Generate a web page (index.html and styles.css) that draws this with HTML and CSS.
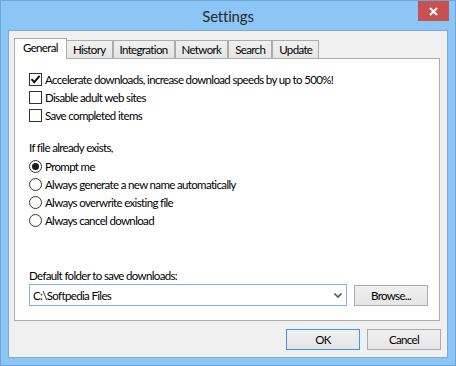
FILE: index.html
```html
<!DOCTYPE html>
<html>
<head>
<meta charset="utf-8">
<title>Settings</title>
<link rel="stylesheet" href="styles.css">
</head>
<body>
<div class="window">
  <div class="titlebar">
    <span class="title">Settings</span>
    <div class="close"><svg width="9" height="9" viewBox="0 0 9 9"><path d="M1 1L8 8M8 1L1 8" stroke="#fff" stroke-width="2" fill="none"/></svg></div>
  </div>
  <div class="client">
    <div class="tabs">
      <div class="tab selected">General</div>
      <div class="tab">History</div>
      <div class="tab">Integration</div>
      <div class="tab">Network</div>
      <div class="tab">Search</div>
      <div class="tab">Update</div>
    </div>
    <div class="panel">
      <div class="options">
        <div class="row"><span class="check checked"><svg width="11" height="11" viewBox="0 0 11 11"><path d="M1.5 5.2L4.2 8.2L9.6 1.8" stroke="#111" stroke-width="2" fill="none"/></svg></span><span>Accelerate downloads, increase download speeds by up to 500%!</span></div>
        <div class="row"><span class="check"></span><span>Disable adult web sites</span></div>
        <div class="row"><span class="check"></span><span>Save completed items</span></div>
      </div>
      <div class="label group-label">If file already exists,</div>
      <div class="options radios">
        <div class="row"><span class="radio on"></span><span>Prompt me</span></div>
        <div class="row"><span class="radio"></span><span>Always generate a new name automatically</span></div>
        <div class="row"><span class="radio"></span><span>Always overwrite existing file</span></div>
        <div class="row"><span class="radio"></span><span>Always cancel download</span></div>
      </div>
      <div class="label folder-label">Default folder to save downloads:</div>
      <div class="folder-row">
        <div class="combo"><span>C:\Softpedia Files</span><svg class="chev" width="8" height="5" viewBox="0 0 8 5"><path d="M0.5 0.5L4 4L7.5 0.5" stroke="#555" stroke-width="1.6" fill="none"/></svg></div>
        <div class="btn browse">Browse...</div>
      </div>
    </div>
    <div class="buttons">
      <div class="btn default">OK</div>
      <div class="btn">Cancel</div>
    </div>
  </div>
</div>
</body>
</html>
```
FILE: styles.css
```css
html, body {
  margin: 0;
  padding: 0;
  background: #8bc6f6;
}
body {
  font-family: "Lato", "Liberation Sans", sans-serif;
  font-size: 11.5px;
  letter-spacing: -0.65px;
  color: #000;
}
.window {
  width: 456px;
  height: 366px;
  box-sizing: border-box;
  border: 1px solid #6ea5d6;
  background: #8bc6f6;
  display: flex;
  flex-direction: column;
}
.titlebar {
  position: relative;
  height: 29px;
  flex: none;
  display: flex;
  justify-content: center;
  align-items: center;
}
.title {
  font-size: 15px;
  letter-spacing: -0.2px;
  color: #2a2a2a;
  padding-top: 1px;
}
.close {
  position: absolute;
  top: 0;
  right: 6px;
  width: 31px;
  height: 20px;
  background: #c75050;
  display: flex;
  align-items: center;
  justify-content: center;
}
.client {
  flex: 1;
  margin: 0 7px 7px 7px;
  border: 1px solid #7fa9d2;
  background: #f0f0f0;
  padding: 7px 7px 7px 5px;
  display: flex;
  flex-direction: column;
}
.tabs {
  display: flex;
  align-items: flex-end;
  height: 20px;
  flex: none;
}
.tab {
  height: 18px;
  box-sizing: border-box;
  border: 1px solid #acacac;
  border-bottom: none;
  background: linear-gradient(#f0f0f0, #e5e5e5);
  padding: 0 6px;
  line-height: 17px;
  margin-left: -1px;
  margin-right: 1px;
}
.tab.selected {
  height: 21px;
  margin-left: 0;
  margin-right: 0;
  margin-bottom: -1px;
  padding: 0 8px;
  background: #fff;
  line-height: 17px;
  position: relative;
  z-index: 1;
}
.panel {
  height: 263px;
  box-sizing: border-box;
  flex: none;
  background: #fff;
  border: 1px solid #acacac;
  padding: 11px 10px 0 14px;
  display: flex;
  flex-direction: column;
}
.options {
  display: flex;
  flex-direction: column;
}
.row {
  height: 18px;
  display: flex;
  align-items: center;
  white-space: nowrap;
}
.check {
  width: 13px;
  height: 13px;
  box-sizing: border-box;
  border: 1px solid #333;
  background: #fff;
  margin-right: 3px;
  display: flex;
  align-items: center;
  justify-content: center;
  flex: none;
}
.radio {
  width: 13px;
  height: 13px;
  box-sizing: border-box;
  border: 1px solid #333;
  border-radius: 50%;
  background: #fff;
  margin-right: 3px;
  flex: none;
  display: flex;
  align-items: center;
  justify-content: center;
}
.radio.on::after {
  content: "";
  width: 7px;
  height: 7px;
  border-radius: 50%;
  background: #1a1a1a;
}
.label {
  line-height: 18px;
  white-space: nowrap;
}
.group-label {
  margin-top: 15px;
}
.radios {
  margin-top: 0;
}
.folder-label {
  margin-top: 39px;
  line-height: 16px;
}
.folder-row {
  display: flex;
  align-items: flex-start;
  gap: 7px;
}
.combo {
  width: 318px;
  height: 22px;
  box-sizing: border-box;
  border: 1px solid #7eb4ea;
  background: #fff;
  display: flex;
  align-items: center;
  justify-content: space-between;
  padding: 0 4px 0 3px;
}
.chev {
  margin-top: 1px;
}
.btn {
  width: 74px;
  height: 21px;
  box-sizing: border-box;
  border: 1px solid #acacac;
  background: linear-gradient(#f0f0f0, #e5e5e5);
  display: flex;
  align-items: center;
  justify-content: center;
}
.browse {
  margin-top: 1px;
}
.buttons {
  display: flex;
  justify-content: flex-end;
  gap: 7px;
  margin-top: 8px;
  margin-right: -1px;
}
.btn.default {
  border-color: #3399ff;
}
```
